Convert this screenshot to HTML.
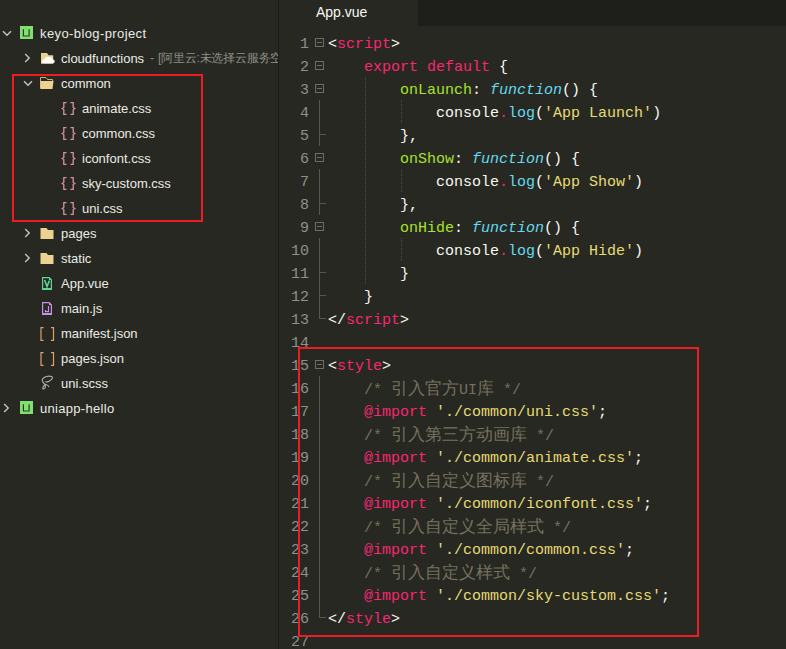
<!DOCTYPE html>
<html><head><meta charset="utf-8">
<style>
html,body{margin:0;padding:0}
body{width:786px;height:649px;overflow:hidden;position:relative;background:#272822;font-family:"Liberation Sans",sans-serif}
.ln{position:absolute;left:270px;width:39px;text-align:right;height:23px;line-height:23px;font-family:"Liberation Mono",monospace;font-size:15px;color:#8f908a}
.cl{position:absolute;left:328px;height:23px;line-height:23px;font-family:"Liberation Mono",monospace;font-size:15px;white-space:pre;color:#f8f8f2}
.w{color:#f8f8f2} .p{color:#f92672} .g{color:#a6e22e} .c{color:#66d9ef} .y{color:#e6db74} .m{color:#75715e}
.i{font-style:italic}
.k{font-size:16.8px}
.fb{position:absolute;left:315px;width:7px;height:7px;border:1px solid #6d6d66}
.fb::after{content:"";position:absolute;left:1px;top:3px;width:5px;height:1px;background:#6d6d66}
.red{position:absolute;border:2px solid #ee1c25;box-sizing:border-box}
</style></head><body>
<div style="position:absolute;left:278px;top:0;width:1px;height:649px;background:#1a1b17"></div>
<div style="position:absolute;left:418px;top:0;width:368px;height:26px;background:#1e1f1b"></div>
<div style="position:absolute;left:316px;top:0;height:25px;line-height:25px;font-size:14px;color:#f8f8f2">App.vue</div>
<div style="position:absolute;left:0;top:0;width:278px;height:649px;overflow:hidden">
<svg style="position:absolute;left:2px;top:30px" width="10" height="7" viewBox="0 0 10 7"><path d="M1 1.2 L5 5.2 L9 1.2" fill="none" stroke="#c4c4c0" stroke-width="1.4"/></svg>
<svg style="position:absolute;left:20px;top:26px" width="13" height="13" viewBox="0 0 13 13"><rect x="0" y="0" width="13" height="13" fill="#80e070"/><path d="M3.4 3.3 V10 H9.1 V3.3" fill="none" stroke="#2d3b26" stroke-width="1.2"/></svg>
<div style="position:absolute;left:40px;top:21px;height:25px;line-height:25px;font-size:13px;color:#ebebe5;white-space:nowrap;letter-spacing:0.4px">keyo-blog-project</div>
<svg style="position:absolute;left:24px;top:53px" width="7" height="10" viewBox="0 0 7 10"><path d="M1.2 1 L5.2 5 L1.2 9" fill="none" stroke="#c4c4c0" stroke-width="1.4"/></svg>
<svg style="position:absolute;left:41px;top:53px" width="15" height="12" viewBox="0 0 15 12"><path d="M0 0 H6 L7.6 2.3 H12.2 V10.7 H0 Z" fill="#ecd290"/><path d="M2.8 10.3 C0.4 10.3 0.4 6.6 3.2 6.5 C3.8 4.4 6 3.4 8 4 C9.6 3.6 11.4 4.6 11.8 6.6 C14.3 6.6 14.3 10.3 12.2 10.3 Z" fill="#ffffff"/></svg>
<div style="position:absolute;left:61px;top:46px;height:25px;line-height:25px;font-size:13px;color:#ebebe5;white-space:nowrap;">cloudfunctions</div>
<div style="position:absolute;left:150px;top:46px;height:25px;line-height:25px;font-size:12px;color:#8f8f88;white-space:nowrap;">-</div>
<div style="position:absolute;left:158px;top:46px;height:25px;line-height:25px;font-size:12px;color:#8f8f88;white-space:nowrap;letter-spacing:-0.2px">[阿里云:未选择云服务空间]</div>
<svg style="position:absolute;left:23px;top:80px" width="10" height="7" viewBox="0 0 10 7"><path d="M1 1.2 L5 5.2 L9 1.2" fill="none" stroke="#c4c4c0" stroke-width="1.4"/></svg>
<svg style="position:absolute;left:40px;top:77px" width="14" height="13" viewBox="0 0 14 13"><path d="M0.5 11.5 V0.5 H6 L7.5 2.5 H12.5 V4" fill="none" stroke="#c9b27a" stroke-width="1"/><path d="M0.5 4 H13.5 L12.5 12 H0.5 Z" fill="#ecd290"/></svg>
<div style="position:absolute;left:61px;top:71px;height:25px;line-height:25px;font-size:13px;color:#ebebe5;white-space:nowrap;">common</div>
<svg style="position:absolute;left:61px;top:101px" width="15" height="15" viewBox="0 0 15 15"><path d="M5.5 1.6 H2.8 V6.5 L1.2 7.5 L2.8 8.5 V13.4 H5.5 M9.5 1.6 H12.2 V6.5 L13.8 7.5 L12.2 8.5 V13.4 H9.5" fill="none" stroke="#d890a2" stroke-width="1.3"/></svg>
<div style="position:absolute;left:82px;top:96px;height:25px;line-height:25px;font-size:13px;color:#ebebe5;white-space:nowrap;">animate.css</div>
<svg style="position:absolute;left:61px;top:126px" width="15" height="15" viewBox="0 0 15 15"><path d="M5.5 1.6 H2.8 V6.5 L1.2 7.5 L2.8 8.5 V13.4 H5.5 M9.5 1.6 H12.2 V6.5 L13.8 7.5 L12.2 8.5 V13.4 H9.5" fill="none" stroke="#d890a2" stroke-width="1.3"/></svg>
<div style="position:absolute;left:82px;top:121px;height:25px;line-height:25px;font-size:13px;color:#ebebe5;white-space:nowrap;">common.css</div>
<svg style="position:absolute;left:61px;top:151px" width="15" height="15" viewBox="0 0 15 15"><path d="M5.5 1.6 H2.8 V6.5 L1.2 7.5 L2.8 8.5 V13.4 H5.5 M9.5 1.6 H12.2 V6.5 L13.8 7.5 L12.2 8.5 V13.4 H9.5" fill="none" stroke="#d890a2" stroke-width="1.3"/></svg>
<div style="position:absolute;left:82px;top:146px;height:25px;line-height:25px;font-size:13px;color:#ebebe5;white-space:nowrap;">iconfont.css</div>
<svg style="position:absolute;left:61px;top:176px" width="15" height="15" viewBox="0 0 15 15"><path d="M5.5 1.6 H2.8 V6.5 L1.2 7.5 L2.8 8.5 V13.4 H5.5 M9.5 1.6 H12.2 V6.5 L13.8 7.5 L12.2 8.5 V13.4 H9.5" fill="none" stroke="#d890a2" stroke-width="1.3"/></svg>
<div style="position:absolute;left:82px;top:171px;height:25px;line-height:25px;font-size:13px;color:#ebebe5;white-space:nowrap;">sky-custom.css</div>
<svg style="position:absolute;left:61px;top:201px" width="15" height="15" viewBox="0 0 15 15"><path d="M5.5 1.6 H2.8 V6.5 L1.2 7.5 L2.8 8.5 V13.4 H5.5 M9.5 1.6 H12.2 V6.5 L13.8 7.5 L12.2 8.5 V13.4 H9.5" fill="none" stroke="#d890a2" stroke-width="1.3"/></svg>
<div style="position:absolute;left:82px;top:196px;height:25px;line-height:25px;font-size:13px;color:#ebebe5;white-space:nowrap;">uni.css</div>
<svg style="position:absolute;left:24px;top:228px" width="7" height="10" viewBox="0 0 7 10"><path d="M1.2 1 L5.2 5 L1.2 9" fill="none" stroke="#c4c4c0" stroke-width="1.4"/></svg>
<svg style="position:absolute;left:40px;top:228px" width="14" height="12" viewBox="0 0 14 12"><path d="M0.5 0 H6.5 L8 2 H13.5 V11 H0.5 Z" fill="#ecd290"/></svg>
<div style="position:absolute;left:61px;top:221px;height:25px;line-height:25px;font-size:13px;color:#ebebe5;white-space:nowrap;">pages</div>
<svg style="position:absolute;left:24px;top:253px" width="7" height="10" viewBox="0 0 7 10"><path d="M1.2 1 L5.2 5 L1.2 9" fill="none" stroke="#c4c4c0" stroke-width="1.4"/></svg>
<svg style="position:absolute;left:40px;top:253px" width="14" height="12" viewBox="0 0 14 12"><path d="M0.5 0 H6.5 L8 2 H13.5 V11 H0.5 Z" fill="#ecd290"/></svg>
<div style="position:absolute;left:61px;top:246px;height:25px;line-height:25px;font-size:13px;color:#ebebe5;white-space:nowrap;">static</div>
<div style="position:absolute;left:61px;top:271px;height:25px;line-height:25px;font-size:13px;color:#ebebe5;white-space:nowrap;">App.vue</div>
<div style="position:absolute;left:61px;top:296px;height:25px;line-height:25px;font-size:13px;color:#ebebe5;white-space:nowrap;">main.js</div>
<div style="position:absolute;left:61px;top:321px;height:25px;line-height:25px;font-size:13px;color:#ebebe5;white-space:nowrap;">manifest.json</div>
<div style="position:absolute;left:61px;top:346px;height:25px;line-height:25px;font-size:13px;color:#ebebe5;white-space:nowrap;">pages.json</div>
<div style="position:absolute;left:61px;top:371px;height:25px;line-height:25px;font-size:13px;color:#ebebe5;white-space:nowrap;">uni.scss</div>
<svg style="position:absolute;left:3px;top:403px" width="7" height="10" viewBox="0 0 7 10"><path d="M1.2 1 L5.2 5 L1.2 9" fill="none" stroke="#c4c4c0" stroke-width="1.4"/></svg>
<svg style="position:absolute;left:20px;top:401px" width="13" height="13" viewBox="0 0 13 13"><rect x="0" y="0" width="13" height="13" fill="#80e070"/><path d="M3.4 3.3 V10 H9.1 V3.3" fill="none" stroke="#2d3b26" stroke-width="1.2"/></svg>
<div style="position:absolute;left:40px;top:396px;height:25px;line-height:25px;font-size:13px;color:#ebebe5;white-space:nowrap;letter-spacing:0.3px">uniapp-hello</div>
<svg style="position:absolute;left:42px;top:277px" width="11" height="13" viewBox="0 0 11 13"><path d="M0.6 0.6 H7 L9.4 3 V12.4 H0.6 Z" fill="none" stroke="#63d296" stroke-width="1.2"/><rect x="0" y="11" width="10" height="2" fill="#63d296"/><path d="M7 0 L10 3 H7 Z" fill="#63d296"/><path d="M2.6 3 L5 9.6 L7.4 3.6" fill="none" stroke="#63d296" stroke-width="1.6"/></svg>
<svg style="position:absolute;left:42px;top:302px" width="11" height="13" viewBox="0 0 11 13"><path d="M0.6 0.6 H7 L9.4 3 V12.4 H0.6 Z" fill="none" stroke="#c592e8" stroke-width="1.2"/><rect x="0" y="11" width="10" height="2" fill="#c592e8"/><path d="M7 0 L10 3 H7 Z" fill="#c592e8"/><path d="M6.5 4 V9.6 H3.5 V8" fill="none" stroke="#c592e8" stroke-width="1.2"/></svg>
<svg style="position:absolute;left:40px;top:327px" width="15" height="14" viewBox="0 0 15 14"><path d="M3.5 0.6 H1 V13.4 H3.5 M11 0.6 H13.5 V13.4 H11" fill="none" stroke="#dfa06a" stroke-width="1.2"/></svg>
<svg style="position:absolute;left:40px;top:352px" width="15" height="14" viewBox="0 0 15 14"><path d="M3.5 0.6 H1 V13.4 H3.5 M11 0.6 H13.5 V13.4 H11" fill="none" stroke="#dfa06a" stroke-width="1.2"/></svg>
<svg style="position:absolute;left:40px;top:374px" width="15" height="17" viewBox="0 0 15 17"><path d="M9 13 C8 11 6 10 5 11 C3 12 2 15 3.5 15 C5.5 15 6 12 4.5 10 C2.5 8 1.5 7 2.5 5 C4 2.5 9 1.5 11.5 2.5 C13.5 3.5 12 6 8.5 7.5 C7.5 8 6 8 5.5 7.5" fill="none" stroke="#b4b4ac" stroke-width="1.1"/></svg>
</div>
<div class="fb" style="top:38px"></div>
<div class="fb" style="top:61px"></div>
<div class="fb" style="top:84px"></div>
<div class="fb" style="top:153px"></div>
<div class="fb" style="top:222px"></div>
<div class="fb" style="top:360px"></div>
<div style="position:absolute;left:319px;top:100px;width:1px;height:46px;background:#575751"></div>
<div style="position:absolute;left:319px;top:169px;width:1px;height:46px;background:#575751"></div>
<div style="position:absolute;left:319px;top:238px;width:1px;height:81px;background:#575751"></div>
<div style="position:absolute;left:319px;top:134px;width:7px;height:1px;background:#575751"></div>
<div style="position:absolute;left:319px;top:203px;width:7px;height:1px;background:#575751"></div>
<div style="position:absolute;left:319px;top:272px;width:7px;height:1px;background:#575751"></div>
<div style="position:absolute;left:319px;top:295px;width:7px;height:1px;background:#575751"></div>
<div style="position:absolute;left:319px;top:318px;width:7px;height:1px;background:#575751"></div>
<div style="position:absolute;left:319px;top:376px;width:1px;height:242px;background:#575751"></div>
<div style="position:absolute;left:319px;top:617px;width:7px;height:1px;background:#575751"></div>
<div style="position:absolute;left:365px;top:77px;width:1px;height:207px;background-image:linear-gradient(#4d4d46 50%, transparent 50%);background-size:1px 2px"></div>
<div style="position:absolute;left:401px;top:100px;width:1px;height:23px;background-image:linear-gradient(#4d4d46 50%, transparent 50%);background-size:1px 2px"></div>
<div style="position:absolute;left:401px;top:169px;width:1px;height:23px;background-image:linear-gradient(#4d4d46 50%, transparent 50%);background-size:1px 2px"></div>
<div style="position:absolute;left:401px;top:238px;width:1px;height:23px;background-image:linear-gradient(#4d4d46 50%, transparent 50%);background-size:1px 2px"></div>
<div class="ln" style="top:33px">1</div>
<div class="cl" style="top:33px"><span class="w">&lt;</span><span class="p">script</span><span class="w">&gt;</span></div>
<div class="ln" style="top:56px">2</div>
<div class="cl" style="top:56px">    <span class="p">export default</span><span class="w"> {</span></div>
<div class="ln" style="top:79px">3</div>
<div class="cl" style="top:79px">        <span class="g">onLaunch</span><span class="w">: </span><span class="c i">function</span><span class="w">() {</span></div>
<div class="ln" style="top:102px">4</div>
<div class="cl" style="top:102px">            <span class="w">console</span><span class="p">.</span><span class="c">log</span><span class="w">(</span><span class="y">&#x27;App Launch&#x27;</span><span class="w">)</span></div>
<div class="ln" style="top:125px">5</div>
<div class="cl" style="top:125px">        <span class="w">},</span></div>
<div class="ln" style="top:148px">6</div>
<div class="cl" style="top:148px">        <span class="g">onShow</span><span class="w">: </span><span class="c i">function</span><span class="w">() {</span></div>
<div class="ln" style="top:171px">7</div>
<div class="cl" style="top:171px">            <span class="w">console</span><span class="p">.</span><span class="c">log</span><span class="w">(</span><span class="y">&#x27;App Show&#x27;</span><span class="w">)</span></div>
<div class="ln" style="top:194px">8</div>
<div class="cl" style="top:194px">        <span class="w">},</span></div>
<div class="ln" style="top:217px">9</div>
<div class="cl" style="top:217px">        <span class="g">onHide</span><span class="w">: </span><span class="c i">function</span><span class="w">() {</span></div>
<div class="ln" style="top:240px">10</div>
<div class="cl" style="top:240px">            <span class="w">console</span><span class="p">.</span><span class="c">log</span><span class="w">(</span><span class="y">&#x27;App Hide&#x27;</span><span class="w">)</span></div>
<div class="ln" style="top:263px">11</div>
<div class="cl" style="top:263px">        <span class="w">}</span></div>
<div class="ln" style="top:286px">12</div>
<div class="cl" style="top:286px">    <span class="w">}</span></div>
<div class="ln" style="top:309px">13</div>
<div class="cl" style="top:309px"><span class="w">&lt;/</span><span class="p">script</span><span class="w">&gt;</span></div>
<div class="ln" style="top:332px">14</div>
<div class="cl" style="top:332px"></div>
<div class="ln" style="top:355px">15</div>
<div class="cl" style="top:355px"><span class="w">&lt;</span><span class="p">style</span><span class="w">&gt;</span></div>
<div class="ln" style="top:378px">16</div>
<div class="cl" style="top:378px">    <span class="m">/* <span class="k">引入官方</span>UI<span class="k">库</span> */</span></div>
<div class="ln" style="top:401px">17</div>
<div class="cl" style="top:401px">    <span class="p">@import</span> <span class="y">&#x27;./common/uni.css&#x27;</span><span class="w">;</span></div>
<div class="ln" style="top:424px">18</div>
<div class="cl" style="top:424px">    <span class="m">/* <span class="k">引入第三方动画库</span> */</span></div>
<div class="ln" style="top:447px">19</div>
<div class="cl" style="top:447px">    <span class="p">@import</span> <span class="y">&#x27;./common/animate.css&#x27;</span><span class="w">;</span></div>
<div class="ln" style="top:470px">20</div>
<div class="cl" style="top:470px">    <span class="m">/* <span class="k">引入自定义图标库</span> */</span></div>
<div class="ln" style="top:493px">21</div>
<div class="cl" style="top:493px">    <span class="p">@import</span> <span class="y">&#x27;./common/iconfont.css&#x27;</span><span class="w">;</span></div>
<div class="ln" style="top:516px">22</div>
<div class="cl" style="top:516px">    <span class="m">/* <span class="k">引入自定义全局样式</span> */</span></div>
<div class="ln" style="top:539px">23</div>
<div class="cl" style="top:539px">    <span class="p">@import</span> <span class="y">&#x27;./common/common.css&#x27;</span><span class="w">;</span></div>
<div class="ln" style="top:562px">24</div>
<div class="cl" style="top:562px">    <span class="m">/* <span class="k">引入自定义样式</span> */</span></div>
<div class="ln" style="top:585px">25</div>
<div class="cl" style="top:585px">    <span class="p">@import</span> <span class="y">&#x27;./common/sky-custom.css&#x27;</span><span class="w">;</span></div>
<div class="ln" style="top:608px">26</div>
<div class="cl" style="top:608px"><span class="w">&lt;/</span><span class="p">style</span><span class="w">&gt;</span></div>
<div class="ln" style="top:631px">27</div>
<div class="cl" style="top:631px"></div>
<div class="red" style="left:12px;top:74px;width:191px;height:148px"></div>
<div class="red" style="left:298px;top:347px;width:401px;height:290px"></div>
</body></html>
